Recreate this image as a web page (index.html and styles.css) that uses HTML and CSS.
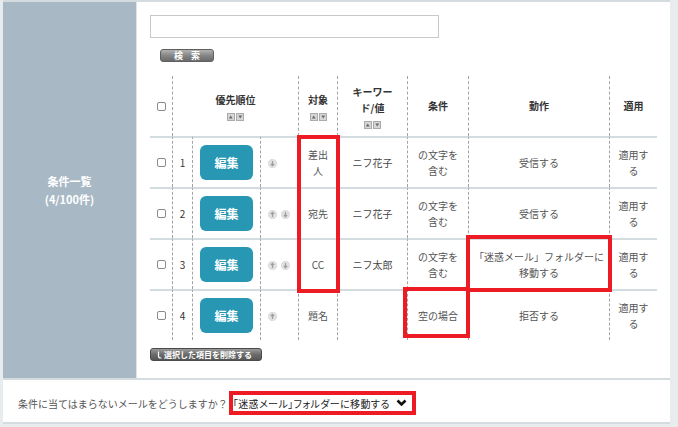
FILE: index.html
```html
<!DOCTYPE html>
<html lang="ja">
<head>
    <meta charset="UTF-8">
    <title>条件一覧</title>
    <link rel="stylesheet" href="styles.css">
</head>
<body>
    <svg class="defs" width="0" height="0">
        <symbol id="sort" viewBox="0 0 17 8">
            <rect x="0.5" y="0.5" width="7" height="7" fill="#d6d6d6" stroke="#ababab"/>
            <path d="M1.8 5.6h3.9L3.75 2.4z" fill="#6a6a6a"/>
            <rect x="9.5" y="0.5" width="7" height="7" fill="#d6d6d6" stroke="#ababab"/>
            <path d="M11.3 2.4h3.9L13.25 5.6z" fill="#6a6a6a"/>
        </symbol>
        <symbol id="up" viewBox="0 0 9 9">
            <circle cx="4.5" cy="4.5" r="4.2" fill="#e2e2e2" stroke="#d0d0d0" stroke-width="0.6"/>
            <path d="M4.5 7V2.4M2.9 4l1.6-1.6L6.1 4" fill="none" stroke="#9d9d9d" stroke-width="1.3"/>
        </symbol>
        <symbol id="down" viewBox="0 0 9 9">
            <circle cx="4.5" cy="4.5" r="4.2" fill="#e2e2e2" stroke="#d0d0d0" stroke-width="0.6"/>
            <path d="M4.5 2v4.6M2.9 5l1.6 1.6L6.1 5" fill="none" stroke="#9d9d9d" stroke-width="1.3"/>
        </symbol>
    </svg>

    <div class="panel">
        <div class="setting">
            <div class="setting-label">条件一覧<br>(4/100件)</div>
            <div class="setting-body">
                <input type="text" class="search-input">
                <button class="btn-search">検 索</button>

                <div class="rules-wrap">
                    <table class="rules">
                        <colgroup>
                            <col class="w-cb">
                            <col class="w-num">
                            <col class="w-edit">
                            <col class="w-move">
                            <col class="w-target">
                            <col class="w-keyword">
                            <col class="w-cond">
                            <col class="w-action">
                            <col class="w-apply">
                        </colgroup>
                        <thead>
                            <tr>
                                <th class="c-cb"><input type="checkbox" class="cb"></th>
                                <th colspan="3">優先順位<svg class="sort"><use href="#sort"/></svg></th>
                                <th>対象<svg class="sort"><use href="#sort"/></svg></th>
                                <th class="th-keyword">キーワード/値<svg class="sort"><use href="#sort"/></svg></th>
                                <th>条件</th>
                                <th class="c-action">動作</th>
                                <th>適用</th>
                            </tr>
                        </thead>
                        <tbody>
                            <tr>
                                <td class="c-cb"><input type="checkbox" class="cb"></td>
                                <td class="c-num">1</td>
                                <td class="c-edit"><button class="btn-edit">編集</button></td>
                                <td class="c-move"><svg class="move"><use href="#down"/></svg></td>
                                <td>差出人</td>
                                <td class="c-keyword">ニフ花子</td>
                                <td>の文字を含む</td>
                                <td class="c-action">受信する</td>
                                <td>適用する</td>
                            </tr>
                            <tr>
                                <td class="c-cb"><input type="checkbox" class="cb"></td>
                                <td class="c-num">2</td>
                                <td class="c-edit"><button class="btn-edit">編集</button></td>
                                <td class="c-move"><svg class="move"><use href="#up"/></svg><svg class="move"><use href="#down"/></svg></td>
                                <td>宛先</td>
                                <td class="c-keyword">ニフ花子</td>
                                <td>の文字を含む</td>
                                <td class="c-action">受信する</td>
                                <td>適用する</td>
                            </tr>
                            <tr>
                                <td class="c-cb"><input type="checkbox" class="cb"></td>
                                <td class="c-num">3</td>
                                <td class="c-edit"><button class="btn-edit">編集</button></td>
                                <td class="c-move"><svg class="move"><use href="#up"/></svg><svg class="move"><use href="#down"/></svg></td>
                                <td>CC</td>
                                <td class="c-keyword">ニフ太郎</td>
                                <td>の文字を含む</td>
                                <td class="c-action">「迷惑メール」フォルダーに移動する</td>
                                <td>適用する</td>
                            </tr>
                            <tr>
                                <td class="c-cb"><input type="checkbox" class="cb"></td>
                                <td class="c-num">4</td>
                                <td class="c-edit"><button class="btn-edit">編集</button></td>
                                <td class="c-move"><svg class="move"><use href="#up"/></svg></td>
                                <td>題名</td>
                                <td class="c-keyword"></td>
                                <td>空の場合</td>
                                <td class="c-action">拒否する</td>
                                <td>適用する</td>
                            </tr>
                        </tbody>
                    </table>

                    <!-- annotation boxes -->
                    <div class="mark mark-target"></div>
                    <div class="mark mark-move"></div>
                    <div class="mark mark-empty"></div>
                </div>

                <button class="btn-delete">
                    <svg width="5" height="8" viewBox="0 0 5 8"><path d="M1.5 0.5v4.5q0 2 2 2h1" fill="none" stroke="#fff" stroke-width="1.2"/></svg>
                    選択した項目を削除する
                </button>
            </div>
        </div>

        <div class="footer">
            <span>条件に当てはまらないメールをどうしますか？</span>
            <span class="fallback">「迷惑メール」フォルダーに移動する
                <svg width="11" height="8" viewBox="0 0 11 8"><path d="M1.5 1.5l4 4 4-4" fill="none" stroke="#111" stroke-width="2.6"/></svg>
            </span>
        </div>
    </div>
</body>
</html>
```

FILE: styles.css
```css
* {
    box-sizing: border-box;
}
body {
    margin: 0;
    padding: 0 0 0 3px;
    background: #e7ecef;
    font-family: "Noto Sans CJK JP", "Noto Sans", sans-serif;
    font-size: 10px;
    color: #555;
}
.defs {
    position: absolute;
}
.panel {
    width: 667px;
    background: #fff;
    border-top: 2px solid #d4dcdf;
}
.setting {
    display: flex;
    height: 376px;
}
.setting-label {
    width: 134px;
    flex: none;
    display: flex;
    align-items: center;
    justify-content: center;
    text-align: center;
    background: #a8b9c5;
    border-right: 1px solid #dde4e7;
    color: #fff;
    font-size: 11px;
    font-weight: bold;
    line-height: 18px;
}
.setting-body {
    flex: 1;
    padding: 13px 13px 0;
}
.search-input {
    display: block;
    width: 289px;
    height: 23px;
    margin: 0;
    padding: 2px 4px;
    border: 1px solid #c9c9c9;
    font: inherit;
}
.btn-search {
    display: block;
    width: 54px;
    height: 13px;
    margin: 11px 0 0 10px;
    padding: 0;
    border: 1px solid #5f5f5f;
    border-radius: 3px;
    background: linear-gradient(#b2b2b2, #868686 50%, #6a6a6a);
    color: #fff;
    font-family: inherit;
    font-size: 9px;
    font-weight: bold;
    line-height: 11px;
    letter-spacing: 3px;
    text-indent: 3px;
}
.rules-wrap {
    position: relative;
    margin-top: 14px;
}
.rules {
    width: 507px;
    table-layout: fixed;
    border-collapse: separate;
    border-spacing: 0;
}
.w-cb { width: 22px; }
.w-num { width: 20px; }
.w-edit { width: 68px; }
.w-move { width: 38px; }
.w-target { width: 39px; }
.w-keyword { width: 70px; }
.w-cond { width: 61px; }
.w-action { width: 141px; }
.w-apply { width: 48px; }

.rules th,
.rules td {
    padding: 0 6px;
    text-align: center;
    vertical-align: middle;
    line-height: 16px;
    border-left: 1px dashed #a3a3a3;
}
.rules th:first-child,
.rules td:first-child {
    border-left: none;
}
.rules th {
    height: 60px;
    color: #333;
    font-weight: bold;
}
.rules td {
    height: 51px;
    border-top: 2px solid #d3dcde;
}
.rules .th-keyword {
    padding: 0 11px;
}
.rules .c-action {
    padding: 0 4px;
}
.rules .c-cb,
.rules .c-num,
.rules .c-edit {
    padding: 0;
}
.rules .c-num {
    color: #333;
}
.rules .c-keyword {
    color: #444;
}
.rules .c-move {
    padding: 0 0 0 7px;
    text-align: left;
}
.sort {
    display: block;
    width: 17px;
    height: 8px;
    margin: 5px auto 0;
}
.move {
    width: 9px;
    height: 9px;
    margin-right: 4px;
    vertical-align: middle;
}
.cb {
    -webkit-appearance: none;
    appearance: none;
    display: block;
    width: 9px;
    height: 9px;
    margin: 0 auto;
    border: 1px solid #8a8a8a;
    border-radius: 2px;
    background: #fff;
}
.btn-edit {
    width: 53px;
    height: 35px;
    padding: 0;
    border: none;
    border-radius: 6px;
    background: #2797b3;
    color: #fff;
    font-family: inherit;
    font-size: 12px;
    font-weight: bold;
}
.mark {
    position: absolute;
    border: 4px solid #ed1c24;
}
.mark-target {
    left: 147px;
    top: 59px;
    width: 43px;
    height: 158px;
}
.mark-move {
    left: 316px;
    top: 159px;
    width: 146px;
    height: 57px;
}
.mark-empty {
    left: 253px;
    top: 211px;
    width: 67px;
    height: 51px;
}
.btn-delete {
    display: flex;
    align-items: center;
    gap: 2px;
    width: 112px;
    height: 13px;
    margin-top: 8px;
    padding: 0 4px 0 6px;
    border: 1px solid #4a4a4a;
    border-radius: 3px;
    background: linear-gradient(#9a9a9a, #6c6c6c 50%, #555);
    color: #fff;
    font-family: inherit;
    font-size: 8px;
    font-weight: bold;
    line-height: 11px;
    white-space: nowrap;
}
.footer {
    display: flex;
    align-items: center;
    height: 46px;
    padding: 11px 15px 7px;
    border-top: 2px solid #d4dcdf;
    border-bottom: 2px solid #d4dcdf;
}
.fallback {
    display: inline-flex;
    align-items: center;
    gap: 6px;
    height: 24px;
    margin-left: 1px;
    padding: 0 5px 0 0;
    border: 4px solid #ed1c24;
    color: #222;
    font-feature-settings: "palt";
    letter-spacing: 0.4px;
}
```
